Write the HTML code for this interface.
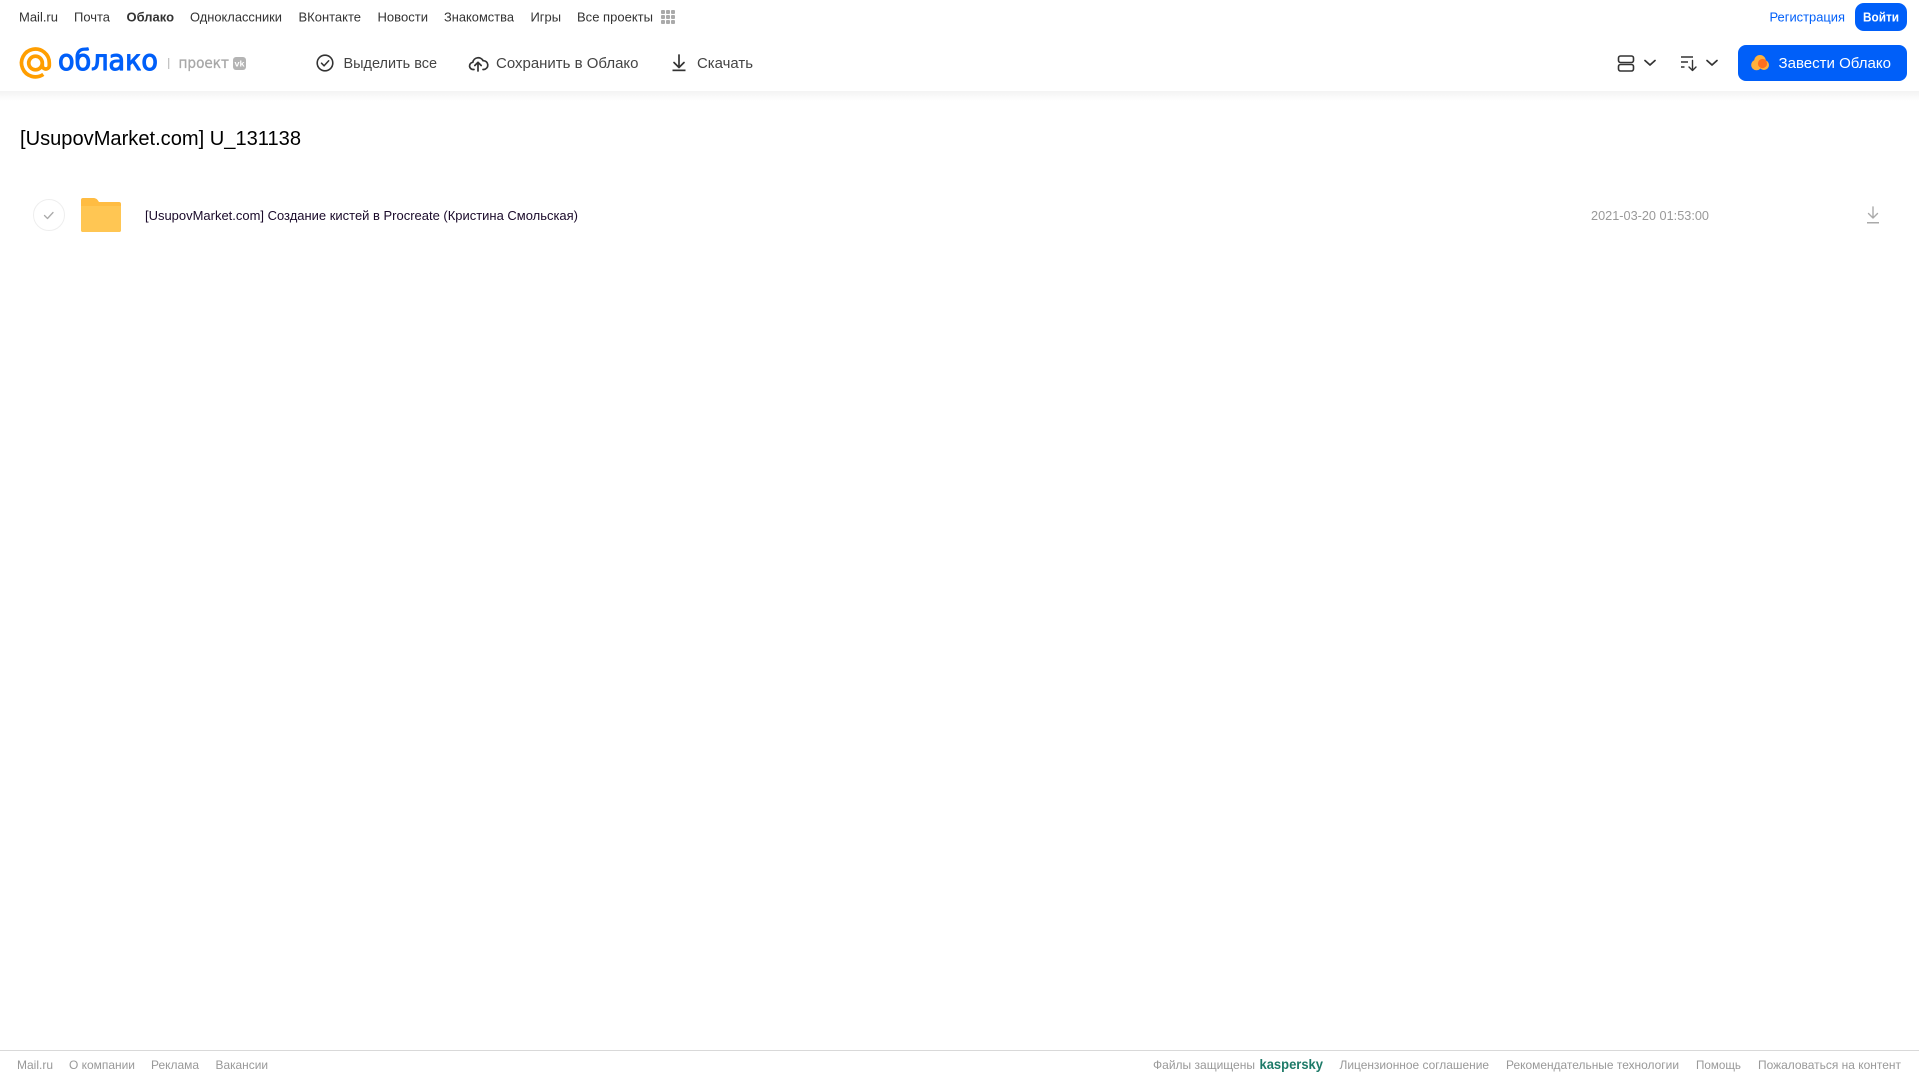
<!DOCTYPE html>
<html lang="ru">
<head>
<meta charset="utf-8">
<title>Облако</title>
<style>
html,body{margin:0;padding:0;background:#fff;width:1919px;height:1079px;overflow:hidden}
svg{display:block;position:absolute;left:0;top:0}
text{font-family:"Liberation Sans",sans-serif}
.n{font-size:13px;fill:#333}
.t{font-size:15px;fill:#444}
.f{font-size:12px;fill:#999}
</style>
</head>
<body>
<svg width="1919" height="1079" viewBox="0 0 1919 1079" xmlns="http://www.w3.org/2000/svg">
<defs>
<linearGradient id="sh" x1="0" y1="0" x2="0" y2="1"><stop offset="0" stop-color="#f3f3f3"/><stop offset="1" stop-color="#fff"/></linearGradient>
</defs>
<rect width="1919" height="1079" fill="#fff"/>
<rect x="0" y="91" width="1919" height="10" fill="url(#sh)"/>

<!-- top nav -->
<text class="n" x="19" y="21.5" textLength="39" lengthAdjust="spacingAndGlyphs">Mail.ru</text>
<text class="n" x="74" y="21.5" textLength="36" lengthAdjust="spacingAndGlyphs">Почта</text>
<text class="n" x="126.500" y="21.5" textLength="47.500" lengthAdjust="spacingAndGlyphs" font-weight="700">Облако</text>
<text class="n" x="190" y="21.5" textLength="92" lengthAdjust="spacingAndGlyphs">Одноклассники</text>
<text class="n" x="298.500" y="21.5" textLength="62.500" lengthAdjust="spacingAndGlyphs">ВКонтакте</text>
<text class="n" x="377.500" y="21.5" textLength="50.500" lengthAdjust="spacingAndGlyphs">Новости</text>
<text class="n" x="444" y="21.5" textLength="70" lengthAdjust="spacingAndGlyphs">Знакомства</text>
<text class="n" x="530.5" y="21.5" textLength="30.5" lengthAdjust="spacingAndGlyphs">Игры</text>
<text class="n" x="577" y="21.5" textLength="76" lengthAdjust="spacingAndGlyphs">Все проекты</text>
<g fill="#aaa">
<rect x="661" y="10" width="4" height="4" rx="1"/><rect x="666" y="10" width="4" height="4" rx="1"/><rect x="671" y="10" width="4" height="4" rx="1"/>
<rect x="661" y="15" width="4" height="4" rx="1"/><rect x="666" y="15" width="4" height="4" rx="1"/><rect x="671" y="15" width="4" height="4" rx="1"/>
<rect x="661" y="20" width="4" height="4" rx="1"/><rect x="666" y="20" width="4" height="4" rx="1"/><rect x="671" y="20" width="4" height="4" rx="1"/>
</g>
<text x="1769.500" y="21.5" font-size="13" fill="#005ff9" textLength="75.500" lengthAdjust="spacingAndGlyphs">Регистрация</text>
<rect x="1855" y="3" width="52" height="28" rx="9" fill="#005ff9"/>
<text x="1863" y="21.5" font-size="13" font-weight="700" fill="#fff" textLength="36" lengthAdjust="spacingAndGlyphs">Войти</text>

<!-- logo -->
<path d="M42.300 63a6.800 6.800 0 1 1-13.600 0a6.800 6.800 0 1 1 13.600 0v2.500a3.500 3.500 0 0 0 7 0v-2.500a13.900 13.900 0 1 0-6 11.400" fill="none" stroke="#ff9e00" stroke-width="3.700"/>
<text x="58" y="70" font-size="28.500" fill="#005ff9" stroke="#005ff9" stroke-width="1.100" stroke-linejoin="round" textLength="100" lengthAdjust="spacingAndGlyphs" style="font-family:'DejaVu Sans',sans-serif">облако</text>
<rect x="168" y="58" width="1.300" height="11" fill="#c4c4c4"/>
<text x="178.500" y="68" font-size="15" fill="#a8a8a8" stroke="#a8a8a8" stroke-width=".3" textLength="50.500" lengthAdjust="spacingAndGlyphs" style="font-family:'DejaVu Sans',sans-serif">проект</text>
<rect x="233" y="57" width="13" height="13" rx="3" fill="#b4b4b4"/>
<text x="234.500" y="66.500" font-size="8" font-weight="700" fill="#fff" textLength="10" lengthAdjust="spacingAndGlyphs">vk</text>

<!-- toolbar -->
<circle cx="325" cy="63" r="7.800" fill="none" stroke="#333" stroke-width="1.600"/>
<path d="M321.500 63.200l2.600 2.600l4.600-5" fill="none" stroke="#333" stroke-width="1.500" stroke-linecap="round" stroke-linejoin="round"/>
<text class="t" x="343.500" y="68" textLength="93.500" lengthAdjust="spacingAndGlyphs">Выделить все</text>

<path d="M474 69.500h-.5a3.600 3.600 0 0 1-.7-7.200a5.500 5.500 0 0 1 10.300-1.600a4.400 4.400 0 0 1 .6 8.800h-.7" fill="none" stroke="#333" stroke-width="1.700" stroke-linecap="round" stroke-linejoin="round"/>
<path d="M478 71v-8.500M474.800 65.500l3.200-3.200l3.200 3.200" fill="none" stroke="#333" stroke-width="1.700" stroke-linecap="round" stroke-linejoin="round"/>
<text class="t" x="496" y="68" textLength="142.500" lengthAdjust="spacingAndGlyphs">Сохранить в Облако</text>

<path d="M679 55v12M674 62.500l5 5l5-5" fill="none" stroke="#333" stroke-width="1.700" stroke-linecap="round" stroke-linejoin="round"/>
<rect x="672.500" y="69.500" width="13" height="1.700" fill="#333"/>
<text class="t" x="697" y="68" textLength="56" lengthAdjust="spacingAndGlyphs">Скачать</text>

<!-- right tools -->
<rect x="1618.500" y="56" width="15" height="6.500" rx="2" fill="none" stroke="#333" stroke-width="1.600"/>
<rect x="1618.500" y="64.500" width="15" height="6.500" rx="2" fill="none" stroke="#333" stroke-width="1.600"/>
<path d="M1645 60.500l5 4.500l5-4.500" fill="none" stroke="#333" stroke-width="1.700" stroke-linecap="round" stroke-linejoin="round"/>
<path d="M1681 57h12M1681 62h7M1681 67h3.500" fill="none" stroke="#333" stroke-width="1.400"/>
<path d="M1692.500 60.500v9.500M1689 67l3.500 3.500l3.500-3.500" fill="none" stroke="#333" stroke-width="1.400" stroke-linecap="round" stroke-linejoin="round"/>
<path d="M1707 60.500l5 4.500l5-4.500" fill="none" stroke="#333" stroke-width="1.700" stroke-linecap="round" stroke-linejoin="round"/>

<rect x="1738" y="45" width="169" height="36" rx="8" fill="#005ff9"/>
<g fill="#ffb13b">
<circle cx="1756.500" cy="65" r="5.300"/>
<circle cx="1760" cy="60.800" r="5.800"/>
<circle cx="1764" cy="65" r="5"/>
</g>
<circle cx="1762.500" cy="63.500" r="4.600" fill="#ff6f1f"/>
<text x="1778.500" y="68" font-size="15" fill="#fff" textLength="112.500" lengthAdjust="spacingAndGlyphs">Завести Облако</text>

<!-- content -->
<text x="20" y="145" font-size="20" fill="#000" textLength="281" lengthAdjust="spacingAndGlyphs">[UsupovMarket.com] U_131138</text>

<circle cx="49" cy="215" r="15.500" fill="#fff" stroke="#eeeeee" stroke-width="1"/>
<path d="M44.500 215.500l3 3l5.500-6" fill="none" stroke="#aaa" stroke-width="1.300" stroke-linecap="round" stroke-linejoin="round"/>

<path d="M81 200a2 2 0 0 1 2-2h10c2.500 0 3.800 .8 4.800 2.200l1.200 1.800h20a2 2 0 0 1 2 2v26a2 2 0 0 1-2 2H83a2 2 0 0 1-2-2z" fill="#ffbc42"/>
<path d="M81 206h40v24a2 2 0 0 1-2 2H83a2 2 0 0 1-2-2z" fill="#ffc653"/>

<text x="145" y="220" font-size="13" fill="#1a0a2a" textLength="433" lengthAdjust="spacingAndGlyphs">[UsupovMarket.com] Создание кистей в Procreate (Кристина Смольская)</text>
<text x="1591" y="220" font-size="13" fill="#999" textLength="118" lengthAdjust="spacingAndGlyphs">2021-03-20 01:53:00</text>
<path d="M1873 207v11M1868.500 213.500l4.500 4.500l4.500-4.500" fill="none" stroke="#aaa" stroke-width="1.400" stroke-linecap="round" stroke-linejoin="round"/>
<rect x="1867" y="222" width="12" height="1.500" fill="#aaa"/>

<!-- footer -->
<rect x="0" y="1050" width="1919" height="1" fill="#d9d9d9"/>
<text class="f" x="17" y="1069" textLength="36" lengthAdjust="spacingAndGlyphs">Mail.ru</text>
<text class="f" x="69" y="1069" textLength="66" lengthAdjust="spacingAndGlyphs">О компании</text>
<text class="f" x="151" y="1069" textLength="48" lengthAdjust="spacingAndGlyphs">Реклама</text>
<text class="f" x="215.500" y="1069" textLength="52.500" lengthAdjust="spacingAndGlyphs">Вакансии</text>
<text class="f" x="1153" y="1069" textLength="102" lengthAdjust="spacingAndGlyphs">Файлы защищены</text>
<text x="1259.500" y="1069" font-size="13.500" font-weight="700" fill="#1d7a68" textLength="63.500" lengthAdjust="spacingAndGlyphs">kaspersky</text>
<text class="f" x="1339.500" y="1069" textLength="149.500" lengthAdjust="spacingAndGlyphs">Лицензионное соглашение</text>
<text class="f" x="1506" y="1069" textLength="173" lengthAdjust="spacingAndGlyphs">Рекомендательные технологии</text>
<text class="f" x="1696" y="1069" textLength="45" lengthAdjust="spacingAndGlyphs">Помощь</text>
<text class="f" x="1758" y="1069" textLength="143" lengthAdjust="spacingAndGlyphs">Пожаловаться на контент</text>
</svg>
</body>
</html>
